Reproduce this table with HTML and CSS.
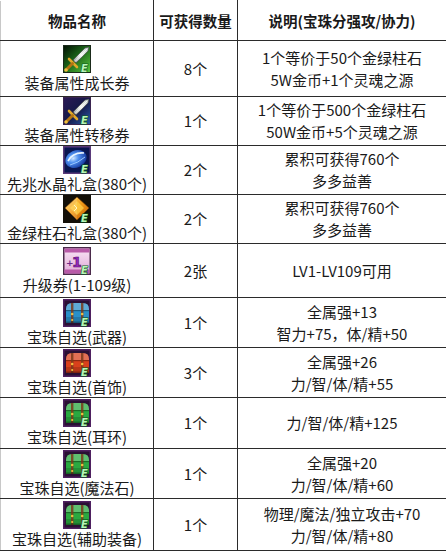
FILE: index.html
```html
<!DOCTYPE html>
<html lang="zh">
<head>
<meta charset="utf-8">
<title>奖励列表</title>
<link rel="stylesheet" href="styles.css">
</head>
<body>
<svg class="defs" aria-hidden="true" focusable="false">
  <defs>
    <linearGradient id="bg-green" x1="0" y1="0" x2="1" y2="1">
      <stop offset="0" stop-color="#041204"/>
      <stop offset="0.45" stop-color="#1b6418"/>
      <stop offset="1" stop-color="#5ac63e"/>
    </linearGradient>
    <linearGradient id="bg-navy" x1="0" y1="0" x2="1" y2="1">
      <stop offset="0" stop-color="#2a1a55"/>
      <stop offset="0.5" stop-color="#141848"/>
      <stop offset="1" stop-color="#2c5aa8"/>
    </linearGradient>
    <linearGradient id="blade" x1="0" y1="1" x2="1" y2="0">
      <stop offset="0" stop-color="#8a9090"/>
      <stop offset="0.5" stop-color="#f2f6f2"/>
      <stop offset="1" stop-color="#b8c4c0"/>
    </linearGradient>
    <radialGradient id="orb" cx="0.4" cy="0.4" r="0.7">
      <stop offset="0" stop-color="#cfe6ff"/>
      <stop offset="0.35" stop-color="#4f90f0"/>
      <stop offset="1" stop-color="#0b2a90"/>
    </radialGradient>
    <linearGradient id="gem" x1="0" y1="0" x2="1" y2="1">
      <stop offset="0" stop-color="#ffe070"/>
      <stop offset="0.5" stop-color="#f29a18"/>
      <stop offset="1" stop-color="#b85400"/>
    </linearGradient>
    <linearGradient id="ticket" x1="0" y1="0" x2="0" y2="1">
      <stop offset="0" stop-color="#f8e4f4"/>
      <stop offset="1" stop-color="#e0a8d8"/>
    </linearGradient>
    <symbol id="sword" viewBox="0 0 28 28">
      <polygon points="10,15 22,3 26,2 25,6 13,18" fill="url(#blade)" stroke="#3a4040" stroke-width="0.6"/>
      <line x1="12" y1="16.5" x2="24" y2="4" stroke="#ffffff" stroke-width="0.8"/>
      <line x1="6" y1="14" x2="14" y2="22" stroke="#e0a828" stroke-width="2.6" stroke-linecap="round"/>
      <line x1="9.5" y1="18.5" x2="3.5" y2="24.5" stroke="#b27414" stroke-width="3" stroke-linecap="round"/>
      <circle cx="3" cy="25" r="1.8" fill="#f0c040"/>
    </symbol>
    <symbol id="chest" viewBox="0 0 28 28">
      <rect x="0" y="0" width="28" height="28" fill="#4e2060"/>
      <rect x="1.5" y="1.5" width="25" height="25" fill="#2a1034"/>
      <path d="M3 10 Q3 4 9 4 L20 4 Q26 4 26 10 L26 24 L3 24 Z" fill="currentColor"/>
      <path d="M3 10 Q3 4 9 4 L20 4 Q26 4 26 10 L26 11 L3 11 Z" fill="#ffffff" opacity="0.25"/>
      <rect x="3" y="11" width="23" height="1.2" fill="#000" opacity="0.35"/>
      <rect x="3" y="18" width="23" height="6" fill="#000" opacity="0.15"/>
      <rect x="8" y="4" width="2.4" height="20" fill="#7a3a1a" opacity="0.85"/>
      <rect x="18" y="4" width="2.4" height="20" fill="#7a3a1a" opacity="0.85"/>
      <circle cx="9.2" cy="15" r="1.3" fill="#f2c040"/>
      <circle cx="19.2" cy="15" r="1.3" fill="#f2c040"/>
      <circle cx="9.2" cy="21" r="1.1" fill="#f2c040"/>
      <rect x="3" y="22.5" width="23" height="1.5" fill="#000" opacity="0.3"/>
    </symbol>
  </defs>
</svg>

<table class="rewards">
  <colgroup>
    <col class="c-name">
    <col class="c-qty">
    <col class="c-desc">
  </colgroup>
  <thead>
    <tr class="row-head">
      <th>物品名称</th>
      <th>可获得数量</th>
      <th>说明(宝珠分强攻/协力)</th>
    </tr>
  </thead>
  <tbody>
    <tr class="h56">
      <td><div class="item">
        <svg class="icon" viewBox="0 0 28 28">
          <rect width="28" height="28" fill="#1a2a1a"/>
          <rect x="1" y="1" width="26" height="26" fill="url(#bg-green)"/>
          <use href="#sword"/>
          <text class="e" x="18" y="26.5">E</text>
        </svg>
        <span class="name">装备属性成长券</span></div></td>
      <td class="qty">8个</td>
      <td class="desc">1个等价于50个金绿柱石<br>5W金币+1个灵魂之源</td>
    </tr>
    <tr class="h49">
      <td><div class="item">
        <svg class="icon" viewBox="0 0 28 28">
          <rect width="28" height="28" fill="#3a2450"/>
          <rect x="1" y="1" width="26" height="26" fill="url(#bg-navy)"/>
          <use href="#sword"/>
          <text class="e" x="18" y="26.5">E</text>
        </svg>
        <span class="name">装备属性转移券</span></div></td>
      <td class="qty">1个</td>
      <td class="desc">1个等价于500个金绿柱石<br>50W金币+5个灵魂之源</td>
    </tr>
    <tr class="h49">
      <td><div class="item">
        <svg class="icon" viewBox="0 0 28 28">
          <rect width="28" height="28" fill="#5a3a7a"/>
          <rect x="1.5" y="1.5" width="25" height="25" fill="#0a1650"/>
          <ellipse cx="13" cy="13" rx="11" ry="8.5" transform="rotate(-25 13 13)" fill="url(#orb)"/>
          <path d="M5 15 Q10 6 21 7" stroke="#e8f4ff" stroke-width="1.6" fill="none"/>
          <path d="M7 19 Q15 17 22 11" stroke="#9cc8ff" stroke-width="1" fill="none"/>
          <text class="e" x="18" y="26.5">E</text>
        </svg>
        <span class="name">先兆水晶礼盒(380个)</span></div></td>
      <td class="qty">2个</td>
      <td class="desc">累积可获得760个<br>多多益善</td>
    </tr>
    <tr class="h49">
      <td><div class="item">
        <svg class="icon" viewBox="0 0 28 28">
          <rect width="28" height="28" fill="#141008"/>
          <polygon points="14,2 26,13 14,25 2,13" fill="url(#gem)" stroke="#7a3a00" stroke-width="0.6"/>
          <polygon points="14,6 21,13 14,20 7,13" fill="#ffd24a" opacity="0.75"/>
          <polygon points="14,2 14,25 2,13" fill="#ffffff" opacity="0.12"/>
          <path d="M11 10 L14 13 L11 16" stroke="#fff7c0" stroke-width="1" fill="none"/>
          <text class="e" x="18" y="26.5">E</text>
        </svg>
        <span class="name">金绿柱石礼盒(380个)</span></div></td>
      <td class="qty">2个</td>
      <td class="desc">累积可获得760个<br>多多益善</td>
    </tr>
    <tr class="h54">
      <td><div class="item">
        <svg class="icon" viewBox="0 0 28 28">
          <rect width="28" height="28" fill="#4a2a4a"/>
          <rect x="1.5" y="1.5" width="25" height="25" fill="url(#ticket)"/>
          <rect x="1.5" y="1.5" width="25" height="4" fill="#b85aa8"/>
          <rect x="1.5" y="22.5" width="25" height="4" fill="#b85aa8"/>
          <text class="plus" x="3" y="19">+</text>
          <text class="one" x="9" y="20">1</text>
          <text class="e" x="18" y="26.5">E</text>
        </svg>
        <span class="name">升级券(1-109级)</span></div></td>
      <td class="qty">2张</td>
      <td class="desc">LV1-LV109可用</td>
    </tr>
    <tr class="h50">
      <td><div class="item">
        <svg class="icon c-blue" viewBox="0 0 28 28">
          <use href="#chest"/>
          <text class="e" x="18" y="26.5">E</text>
        </svg>
        <span class="name">宝珠自选(武器)</span></div></td>
      <td class="qty">1个</td>
      <td class="desc">全属强+13<br>智力+75，体/精+50</td>
    </tr>
    <tr class="h50">
      <td><div class="item">
        <svg class="icon c-red" viewBox="0 0 28 28">
          <use href="#chest"/>
          <text class="e" x="18" y="26.5">E</text>
        </svg>
        <span class="name">宝珠自选(首饰)</span></div></td>
      <td class="qty">3个</td>
      <td class="desc">全属强+26<br>力/智/体/精+55</td>
    </tr>
    <tr class="h51">
      <td><div class="item">
        <svg class="icon c-green" viewBox="0 0 28 28">
          <use href="#chest"/>
          <text class="e" x="18" y="26.5">E</text>
        </svg>
        <span class="name">宝珠自选(耳环)</span></div></td>
      <td class="qty">1个</td>
      <td class="desc">力/智/体/精+125</td>
    </tr>
    <tr class="h50">
      <td><div class="item">
        <svg class="icon c-green" viewBox="0 0 28 28">
          <use href="#chest"/>
          <text class="e" x="18" y="26.5">E</text>
        </svg>
        <span class="name">宝珠自选(魔法石)</span></div></td>
      <td class="qty">1个</td>
      <td class="desc">全属强+20<br>力/智/体/精+60</td>
    </tr>
    <tr class="h52">
      <td><div class="item">
        <svg class="icon c-green" viewBox="0 0 28 28">
          <use href="#chest"/>
          <text class="e" x="18" y="26.5">E</text>
        </svg>
        <span class="name">宝珠自选(辅助装备)</span></div></td>
      <td class="qty">1个</td>
      <td class="desc">物理/魔法/独立攻击+70<br>力/智/体/精+80</td>
    </tr>
  </tbody>
</table>
</body>
</html>
```

FILE: styles.css
```css
html, body {
  margin: 0;
  padding: 0;
  background: #ffffff;
}

body {
  font-family: "Noto Sans CJK SC", "Microsoft YaHei", sans-serif;
  color: #1a1a1a;
}

.defs {
  display: block;
  width: 0;
  height: 0;
  overflow: hidden;
}

.rewards {
  width: 446px;
  border-collapse: collapse;
  table-layout: fixed;
  font-size: 15px;
}

.c-name { width: 153px; }
.c-qty { width: 84px; }
.c-desc { width: 209px; }

.rewards th,
.rewards td {
  border: 1px solid #2b2b2b;
  padding: 0;
  text-align: center;
  vertical-align: middle;
}

.rewards tr > :first-child {
  border-left-color: #c8c8c8;
}

.rewards thead th {
  border-top-color: #ffffff;
  font-size: 14.5px;
  font-weight: bold;
  line-height: 20px;
  background: #ffffff;
}

.row-head { height: 40px; }
.h49 { height: 49px; }
.h50 { height: 50px; }
.h51 { height: 51px; }
.h52 { height: 52px; }
.h54 { height: 54px; }
.h56 { height: 56px; }

.item {
  display: flex;
  flex-direction: column;
  align-items: center;
}

.icon {
  display: block;
  width: 28px;
  height: 28px;
}

.name {
  display: block;
  line-height: 20px;
  white-space: nowrap;
}

.qty {
  line-height: 20px;
}

.desc {
  line-height: 22px;
}

.e {
  font-family: "DejaVu Sans", sans-serif;
  font-size: 10px;
  font-weight: bold;
  font-style: italic;
  fill: #b8f5b8;
  stroke: #0a5a1e;
  stroke-width: 1.2px;
  paint-order: stroke;
}

.plus {
  font-family: "DejaVu Sans", sans-serif;
  font-size: 9px;
  font-weight: bold;
  fill: #6a2a8a;
}

.one {
  font-family: "DejaVu Sans", sans-serif;
  font-size: 14px;
  font-weight: bold;
  fill: #9a28c0;
  stroke: #4a0a60;
  stroke-width: 0.6px;
}

.c-blue { color: #2a8fc8; }
.c-red { color: #d8401c; }
.c-green { color: #2aa840; }
```
